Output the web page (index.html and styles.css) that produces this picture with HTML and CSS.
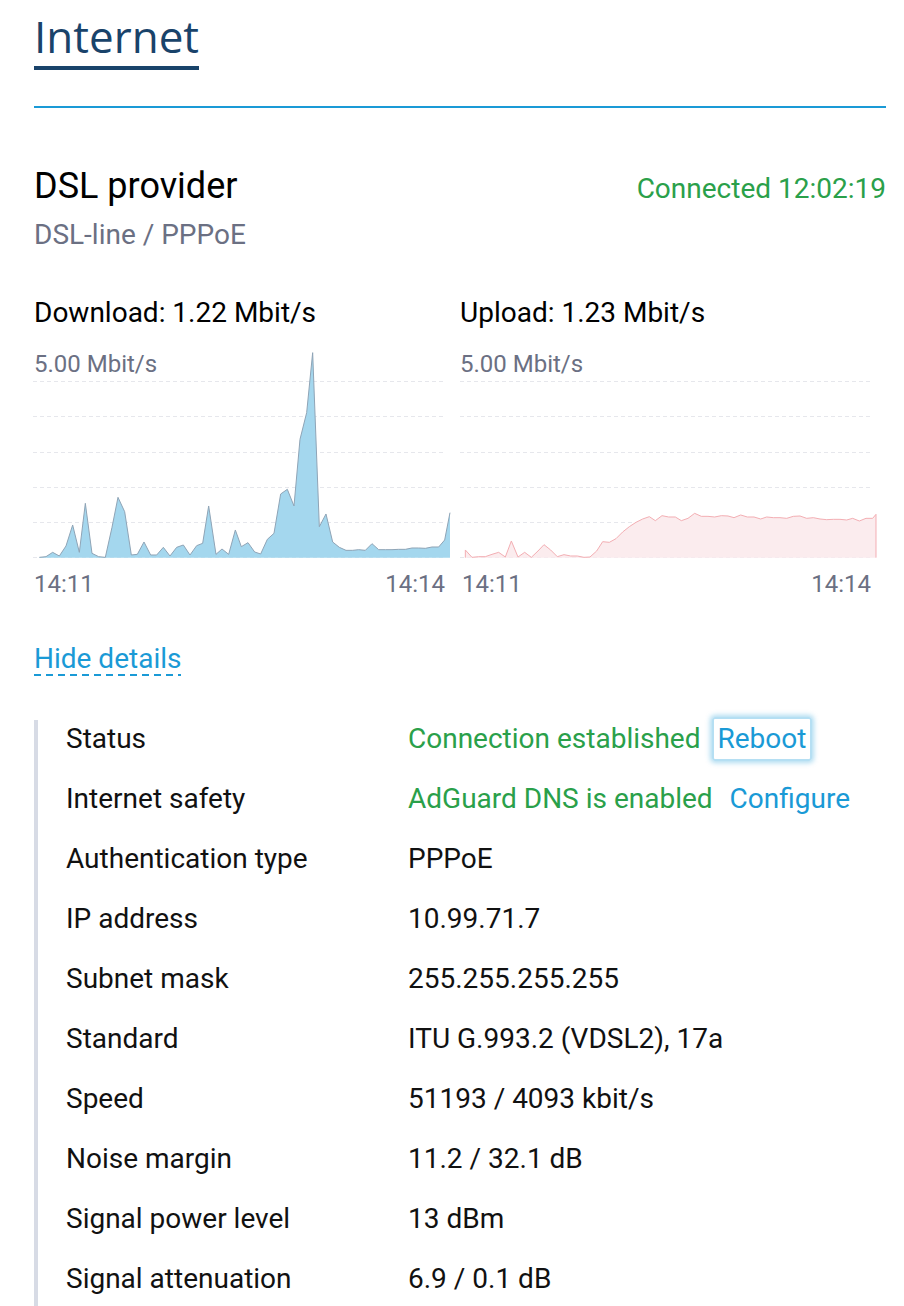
FILE: index.html
```html
<!DOCTYPE html>
<html lang="en">
<head>
<meta charset="utf-8">
<title>Internet</title>
<link rel="stylesheet" href="styles.css">
</head>
<body>
<div class="page">
  <header class="tabs">
    <h1 class="tab-title">Internet</h1>
  </header>

  <section class="provider">
    <div class="provider-head">
      <h2 class="provider-name">DSL provider</h2>
      <span class="provider-state">Connected 12:02:19</span>
    </div>
    <div class="provider-sub">DSL-line / PPPoE</div>

    <div class="charts">
      <div class="chart">
        <div class="chart-title">Download: 1.22 Mbit/s</div>
        <div class="chart-max">5.00 Mbit/s</div>
        <svg class="chart-svg" width="418" height="178" viewBox="0 0 418 178">
          <g class="grid">
            <line x1="-1" y1="1.5" x2="411" y2="1.5"/>
            <line x1="-1" y1="36.5" x2="411" y2="36.5"/>
            <line x1="-1" y1="72.5" x2="411" y2="72.5"/>
            <line x1="-1" y1="107.5" x2="411" y2="107.5"/>
            <line x1="-1" y1="142.5" x2="411" y2="142.5"/>
            <line x1="-1" y1="177.5" x2="411" y2="177.5"/>
          </g>
          <g transform="translate(-14,-40) scale(0.33333)">
            <path class="fill-down" d="M58,652 L78,650 98,637 118,648 138,618 158,555 178,637 196,490 216,640 236,650 256,652 276,562 294,472 314,515 334,645 352,643 372,606 392,645 410,645 430,622 450,648 470,622 490,615 510,645 530,617 548,610 566,498 588,643 606,627 626,643 646,570 664,620 684,608 704,636 722,642 742,598 762,580 782,462 802,448 822,498 840,298 860,218 878,38 898,560 918,522 938,606 958,622 978,631 998,631 1016,629 1036,631 1056,611 1076,629 1096,629 1116,629 1136,628 1156,628 1176,624 1196,624 1216,625 1236,621 1256,621 1274,600 1290,518 L1290,653 L58,653 Z"/>
            <polyline class="line-down" vector-effect="non-scaling-stroke" points="58,652 78,650 98,637 118,648 138,618 158,555 178,637 196,490 216,640 236,650 256,652 276,562 294,472 314,515 334,645 352,643 372,606 392,645 410,645 430,622 450,648 470,622 490,615 510,645 530,617 548,610 566,498 588,643 606,627 626,643 646,570 664,620 684,608 704,636 722,642 742,598 762,580 782,462 802,448 822,498 840,298 860,218 878,38 898,560 918,522 938,606 958,622 978,631 998,631 1016,629 1036,631 1056,611 1076,629 1096,629 1116,629 1136,628 1156,628 1176,624 1196,624 1216,625 1236,621 1256,621 1274,600 1290,518"/>
          </g>
        </svg>
        <div class="chart-axis"><span>14:11</span><span>14:14</span></div>
      </div>

      <div class="chart">
        <div class="chart-title">Upload: 1.23 Mbit/s</div>
        <div class="chart-max">5.00 Mbit/s</div>
        <svg class="chart-svg" width="418" height="178" viewBox="0 0 418 178">
          <g class="grid">
            <line x1="0" y1="1.5" x2="411" y2="1.5"/>
            <line x1="0" y1="36.5" x2="411" y2="36.5"/>
            <line x1="0" y1="72.5" x2="411" y2="72.5"/>
            <line x1="0" y1="107.5" x2="411" y2="107.5"/>
            <line x1="0" y1="142.5" x2="411" y2="142.5"/>
            <line x1="0" y1="177.5" x2="411" y2="177.5"/>
          </g>
          <g transform="translate(-10,-40) scale(0.33333)">
            <path class="fill-up" d="M46,630 L66,652 86,650 106,650 126,643 146,637 166,651 184,603 204,651 224,637 244,652 264,633 282,614 302,630 322,650 342,644 362,648 382,648 402,652 420,651 440,633 458,605 478,607 498,596 518,576 538,560 558,547 578,537 598,530 616,542 636,527 656,531 676,531 694,542 714,535 734,520 754,529 774,529 794,531 814,527 834,528 852,533 872,525 892,531 912,531 932,537 950,531 970,533 990,533 1010,535 1030,529 1050,528 1070,535 1090,533 1110,537 1130,539 1150,538 1170,538 1190,540 1208,535 1228,543 1248,535 1268,535 1278,523 L1278,653 L46,653 Z"/>
            <polyline class="line-up" vector-effect="non-scaling-stroke" points="46,653 46,630 66,652 86,650 106,650 126,643 146,637 166,651 184,603 204,651 224,637 244,652 264,633 282,614 302,630 322,650 342,644 362,648 382,648 402,652 420,651 440,633 458,605 478,607 498,596 518,576 538,560 558,547 578,537 598,530 616,542 636,527 656,531 676,531 694,542 714,535 734,520 754,529 774,529 794,531 814,527 834,528 852,533 872,525 892,531 912,531 932,537 950,531 970,533 990,533 1010,535 1030,529 1050,528 1070,535 1090,533 1110,537 1130,539 1150,538 1170,538 1190,540 1208,535 1228,543 1248,535 1268,535 1278,523 1278,653"/>
          </g>
        </svg>
        <div class="chart-axis"><span>14:11</span><span>14:14</span></div>
      </div>
    </div>

    <a class="toggle" href="#">Hide details</a>

    <div class="details">
      <div class="row">
        <span class="label">Status</span>
        <span class="value"><span class="ok">Connection established</span><a class="action focused" href="#">Reboot</a></span>
      </div>
      <div class="row">
        <span class="label">Internet safety</span>
        <span class="value"><span class="ok">AdGuard DNS is enabled</span><a class="action" href="#">Configure</a></span>
      </div>
      <div class="row">
        <span class="label">Authentication type</span>
        <span class="value">PPPoE</span>
      </div>
      <div class="row">
        <span class="label">IP address</span>
        <span class="value">10.99.71.7</span>
      </div>
      <div class="row">
        <span class="label">Subnet mask</span>
        <span class="value">255.255.255.255</span>
      </div>
      <div class="row">
        <span class="label">Standard</span>
        <span class="value">ITU G.993.2 (VDSL2), 17a</span>
      </div>
      <div class="row">
        <span class="label">Speed</span>
        <span class="value">51193 / 4093 kbit/s</span>
      </div>
      <div class="row">
        <span class="label">Noise margin</span>
        <span class="value">11.2 / 32.1 dB</span>
      </div>
      <div class="row">
        <span class="label">Signal power level</span>
        <span class="value">13 dBm</span>
      </div>
      <div class="row">
        <span class="label">Signal attenuation</span>
        <span class="value">6.9 / 0.1 dB</span>
      </div>
    </div>
  </section>
</div>
</body>
</html>
```

FILE: styles.css
```css
* { box-sizing: border-box; }

html, body {
  margin: 0;
  padding: 0;
  background: #ffffff;
}

body {
  font-family: Roboto, "Liberation Sans", sans-serif;
  font-size: 28px;
  color: #111111;
  overflow: hidden;
  height: 1306px;
}

.page {
  width: 904px;
  padding: 0 18px 0 34px;
}

.tabs {
  border-bottom: 2px solid #1a9ad6;
  padding-top: 10px;
  padding-bottom: 36px;
}

.tab-title {
  display: inline-block;
  margin: 0;
  font-family: "Open Sans", "Noto Sans", sans-serif;
  font-weight: 400;
  font-size: 44px;
  line-height: 52px;
  color: #19436a;
  padding-bottom: 4px;
  border-bottom: 4px solid #19436a;
}

.provider {
  padding-top: 58px;
}

.provider-head {
  display: flex;
  justify-content: space-between;
  align-items: baseline;
}

.provider-name {
  margin: 0;
  font-weight: 400;
  font-size: 36px;
  line-height: 40px;
  color: #000000;
}

.provider-state {
  color: #2aa04a;
  font-size: 28px;
}

.provider-sub {
  margin-top: 11px;
  font-size: 28px;
  line-height: 36px;
  color: #6b7083;
}

.charts {
  display: flex;
  margin-top: 42px;
}

.chart {
  width: 426px;
}

.chart-title {
  font-size: 28px;
  line-height: 36px;
  color: #000000;
}

.chart-max {
  margin-top: 17px;
  font-size: 24px;
  line-height: 32px;
  color: #6b7083;
}

.chart-svg {
  display: block;
  margin-top: 0;
  overflow: visible;
}

.grid line {
  stroke: #e6e7ec;
  stroke-width: 1;
  stroke-dasharray: 4 3;
}

.fill-down { fill: #a4d7ee; }
.line-down { fill: none; stroke: #8fa4b6; stroke-width: 1; }
.fill-up { fill: #fbecee; }
.line-up { fill: none; stroke: #f3aeb3; stroke-width: 1; }

.chart-axis {
  display: flex;
  justify-content: space-between;
  width: 411px;
  margin-top: 10px;
  font-size: 24px;
  line-height: 32px;
  color: #6b7083;
}

.chart + .chart .chart-axis { padding-left: 2px; }

.toggle {
  display: inline-block;
  margin-top: 44px;
  font-size: 28px;
  line-height: 30px;
  padding-bottom: 2px;
  color: #1a9ad6;
  text-decoration: none;
  background-image: repeating-linear-gradient(to right, #1a9ad6 0 7px, transparent 7px 12px);
  background-size: 100% 2px;
  background-repeat: no-repeat;
  background-position: left bottom;
}

.details {
  margin-top: 44px;
  border-left: 4px solid #d7dbe5;
  padding-left: 28px;
  padding-bottom: 40px;
}

.row {
  display: grid;
  grid-template-columns: 342px 1fr;
  line-height: 38px;
  margin-bottom: 22px;
  font-size: 28px;
  color: #111111;
}

.value {
  display: flex;
  align-items: center;
}

.ok { color: #2aa04a; }

.action {
  display: inline-block;
  margin: -3px 0 -3px 11px;
  padding: 1px 4px;
  border: 2px solid transparent;
  border-radius: 3px;
  color: #1a9ad6;
  text-decoration: none;
}

.action.focused {
  border-color: #b5dff3;
  box-shadow: 0 0 5px 2px rgba(26, 154, 214, 0.35);
}
```
